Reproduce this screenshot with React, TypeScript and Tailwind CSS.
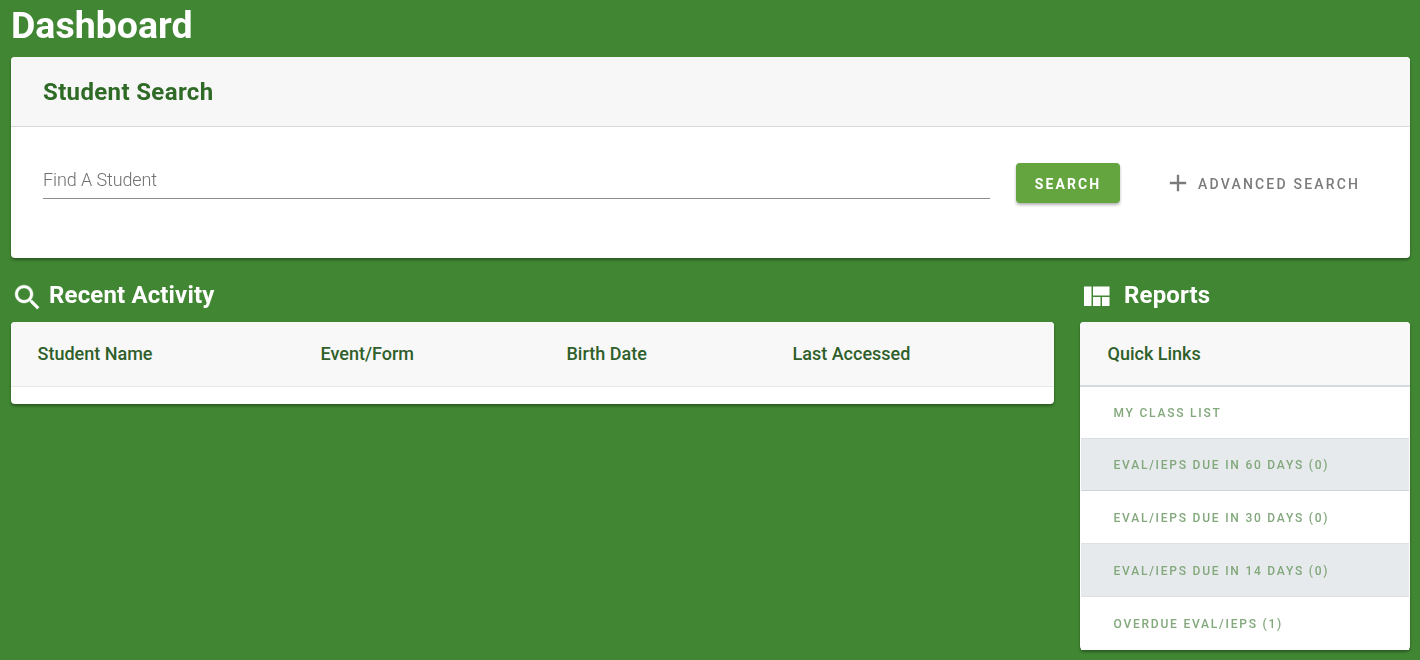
const links = [
  { label: 'My Class List', height: 'h-[52px]', line: 'border-[#d9dce1]', shaded: false },
  { label: 'Eval/IEPs Due In 60 Days (0)', height: 'h-[52px]', line: 'border-[#d0d3d9]', shaded: true },
  { label: 'Eval/IEPs Due In 30 Days (0)', height: 'h-[53px] pt-[2px]', line: 'border-[#dfe1e4]', shaded: false },
  { label: 'Eval/IEPs Due In 14 Days (0)', height: 'h-[53px] pt-[2px]', line: 'border-[#dfe1e4]', shaded: true },
  { label: 'Overdue Eval/IEPs (1)', height: 'h-[53px] pt-[2px]', line: 'border-transparent', shaded: false },
];

const cardShadow = 'shadow-[0_2px_3px_rgba(0,0,0,0.35)]';

// App shell: page title, search card, then activity table beside the reports list.
export default function App() {
  return (
    <div className="h-[660px] overflow-hidden bg-[#418733] pl-[11px] pr-[10px] font-['Roboto',sans-serif]">
      <h1 className="h-[57px] pt-[4px] text-[37.5px] leading-[42px] font-bold text-white will-change-transform">Dashboard</h1>

      <section className={`h-[201px] rounded-[4px] bg-white will-change-transform ${cardShadow}`}>
        <div className="flex h-[70px] items-center rounded-t-[4px] border-b border-[#d8d8d8] bg-[#f7f7f7] pl-[32px]">
          <h2 className="text-[24px] leading-[28px] font-bold tracking-[0.36px] text-[#2f6b26]">Student Search</h2>
        </div>
        <div className="flex items-start pl-[32px] pt-[36px]">
          <div className="h-[36px] w-[947px] shrink-0 border-b border-[#8c8c8c] pt-[5px] text-[18px] leading-[24px] font-light tracking-[-0.1px] text-[#707070]">
            Find A Student
          </div>
          <button className="ml-[26px] h-[40px] w-[104px] shrink-0 rounded-[4px] bg-[#64a53f] pt-[2px] text-[14px] font-bold tracking-[2.1px] text-white shadow-[0_2px_3px_rgba(0,0,0,0.3)]">
            SEARCH
          </button>
          <div className="ml-[44px] flex h-[40px] shrink-0 items-center whitespace-nowrap text-[14px] font-medium tracking-[2.2px] text-[#7b7b7b]">
            <svg viewBox="0 0 24 24" className="mr-[6px] h-[28px] w-[28px] fill-[#7b7b7b]">
              <path d="M19 13h-6v6h-2v-6H5v-2h6V5h2v6h6v2z" />
            </svg>
            <span className="pt-[2px]">ADVANCED SEARCH</span>
          </div>
        </div>
      </section>

      <div className="mt-[16px] grid grid-cols-[1043px_330px] gap-x-[26px]">
        <div>
          <div className="mb-[6px] flex h-[42px] items-center will-change-transform">
            <svg viewBox="0 0 24 24" className="mt-[4px] h-[33px] w-[33px] fill-white stroke-white stroke-[0.3]">
              <path d="M15.5 14h-.79l-.28-.27C15.41 12.59 16 11.11 16 9.5 16 5.91 13.09 3 9.5 3S3 5.91 3 9.5 5.91 16 9.5 16c1.61 0 3.09-.59 4.23-1.57l.27.28v.79l5 4.99L20.49 19l-4.99-5zm-6 0C7.01 14 5 11.99 5 9.5S7.01 5 9.5 5 14 7.01 14 9.5 11.99 14 9.5 14z" />
            </svg>
            <h2 className="ml-[5px] text-[24px] leading-[28px] font-bold tracking-[0.15px] text-white">Recent Activity</h2>
          </div>
          <div className={`h-[82px] rounded-[4px] bg-white ${cardShadow}`}>
            <div className="grid h-[65px] grid-cols-[283px_246px_226px_1fr] items-center rounded-t-[4px] border-b border-[#e6e9ee] bg-[#f8f8f8] pb-[2px] pl-[26.5px] text-[18px] font-medium text-[#2f5f2a]">
              <span>Student Name</span>
              <span>Event/Form</span>
              <span>Birth Date</span>
              <span>Last Accessed</span>
            </div>
          </div>
        </div>

        <div>
          <div className="mb-[6px] flex h-[42px] items-center will-change-transform">
            <svg viewBox="0 0 24 24" className="-ml-[2px] mt-[4px] h-[36px] w-[36px] fill-white">
              <path d="M10 18h5v-6h-5v6zm-6 0h5V5H4v13zm12 0h5v-6h-5v6zM10 5v6h11V5H10z" />
            </svg>
            <h2 className="ml-[10px] text-[24px] leading-[28px] font-bold tracking-[0.15px] text-white">Reports</h2>
          </div>
          <div className={`h-[328px] rounded-[4px] bg-white ${cardShadow}`}>
            <div className="flex h-[65px] items-center rounded-t-[4px] border-b-2 border-[#d5dae0] bg-[#f8f8f8] pl-[27.5px] text-[18px] font-medium text-[#2f5f2a]">
              Quick Links
            </div>
            <ul className="px-px will-change-transform">
              {links.map((link) => (
                <li
                  key={link.label}
                  className={`flex items-center border-b pl-[32.5px] text-[12px] font-medium uppercase tracking-[1.78px] text-[#82a87c] ${link.height} ${link.line} ${
                    link.shaded ? 'bg-[#e7eaed]' : 'bg-white'
                  }`}
                >
                  {link.label}
                </li>
              ))}
            </ul>
          </div>
        </div>
      </div>
    </div>
  );
}
